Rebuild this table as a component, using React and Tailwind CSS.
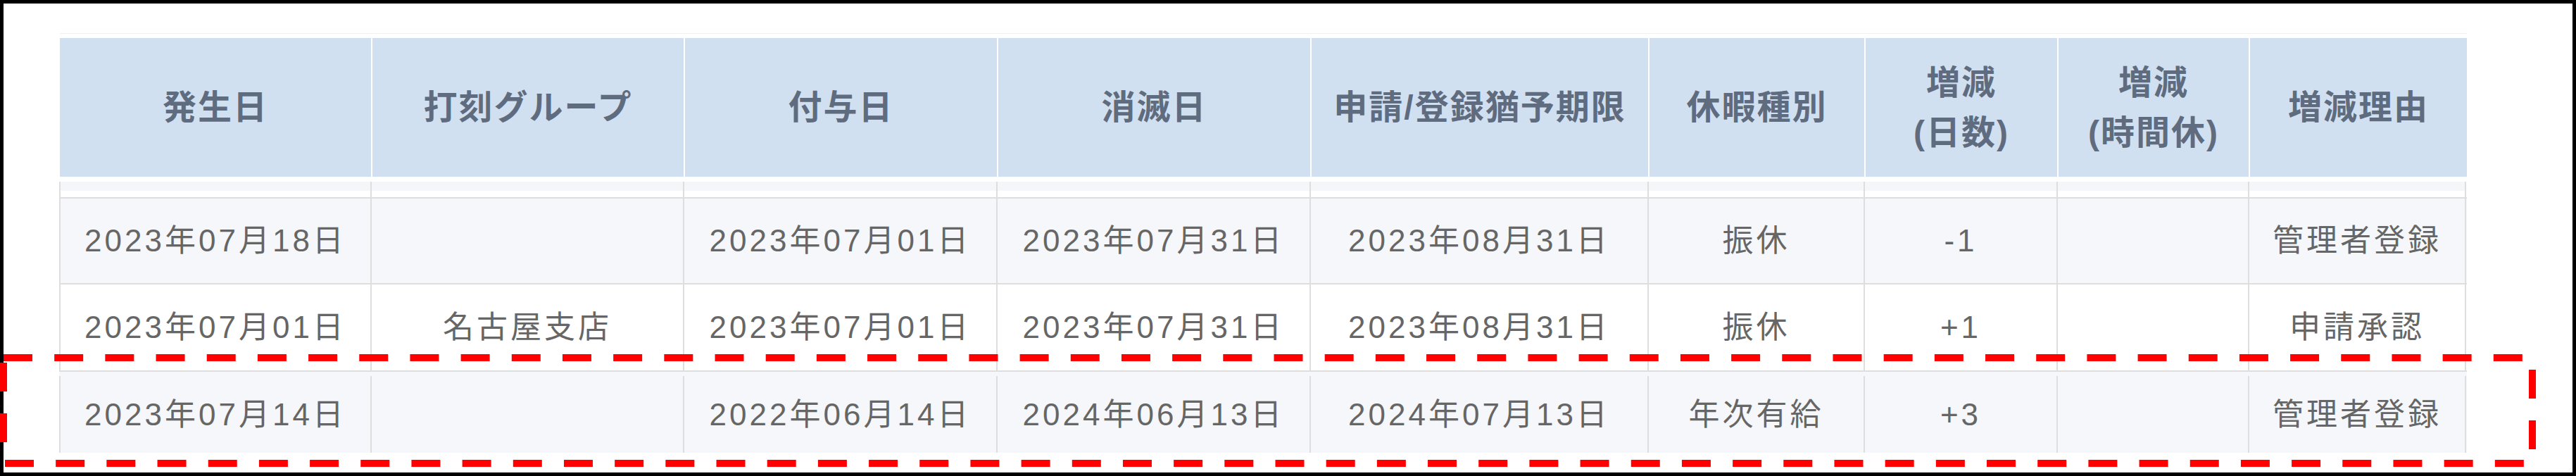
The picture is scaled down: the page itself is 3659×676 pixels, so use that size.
import React from 'react';

// Leave history table (休暇の増減履歴) with a red dashed annotation box
// drawn over the last row, as in the captured screenshot.

const COLS = 'grid-cols-[442px_444px_445px_445px_480px_307px_274px_272px_310px]';

const HEADERS = [
  ['発生日'],
  ['打刻グループ'],
  ['付与日'],
  ['消滅日'],
  ['申請/登録猶予期限'],
  ['休暇種別'],
  ['増減', '(日数)'],
  ['増減', '(時間休)'],
  ['増減理由'],
];

const ROWS = [
  {
    bg: 'bg-[#f5f7fa]',
    h: 'h-[122px]',
    cells: ['2023年07月18日', '', '2023年07月01日', '2023年07月31日', '2023年08月31日', '振休', '-1', '', '管理者登録'],
  },
  {
    bg: 'bg-white',
    h: 'h-[124px]',
    cells: ['2023年07月01日', '名古屋支店', '2023年07月01日', '2023年07月31日', '2023年08月31日', '振休', '+1', '', '申請承認'],
  },
  {
    bg: 'bg-[#f5f7fa]',
    h: 'h-[117px] pt-[6px]',
    cells: ['2023年07月14日', '', '2022年06月14日', '2024年06月13日', '2024年07月13日', '年次有給', '+3', '', '管理者登録'],
  },
];

function HeaderRow() {
  return (
    <div className={`grid ${COLS} h-[197px]`}>
      {HEADERS.map((lines, i) => (
        <div
          key={i}
          className={`flex flex-col items-center justify-center bg-[#d1e0f0] text-[48px] leading-[71px] font-bold tracking-[2px] text-[#5f6c7f] ${
            i > 0 ? 'border-l-2 border-white' : ''
          }`}
        >
          {lines.map((l) => (
            <span key={l}>{l}</span>
          ))}
        </div>
      ))}
    </div>
  );
}

function SpacerRow() {
  return (
    <div className={`grid ${COLS} h-[22px]`}>
      {HEADERS.map((_, i) => (
        <div
          key={i}
          className={`border-l-2 border-[#dedede] ${i === HEADERS.length - 1 ? 'border-r-2' : ''}`}
        >
          <div className="h-[13px] bg-[#f5f6f9]" />
        </div>
      ))}
    </div>
  );
}

function BodyRow({ row }) {
  return (
    <div className={`grid ${COLS} ${row.bg} border-t-2 border-[#dedede] box-border ${row.h}`}>
      {row.cells.map((c, i) => (
        <div
          key={i}
          className={`flex items-center justify-center border-l-2 border-[#dedede] text-[44px] tracking-[4px] text-[#666666] ${
            i === row.cells.length - 1 ? 'border-r-2' : ''
          }`}
        >
          {c}
        </div>
      ))}
    </div>
  );
}

function Annotation() {
  return (
    <svg className="absolute top-0 left-0 pointer-events-none" width="3659" height="676">
      <g stroke="#ff0000" strokeWidth="10" fill="none">
        <line x1="5" y1="508" x2="3583" y2="508" strokeDasharray="41 31.18" />
        <line x1="7" y1="658" x2="3585" y2="658" strokeDasharray="41 31.18" />
        <line x1="5" y1="515" x2="5" y2="650" strokeDasharray="41 31" />
        <line x1="3597" y1="525" x2="3597" y2="650" strokeDasharray="41 31" />
      </g>
    </svg>
  );
}

export default function App() {
  return (
    <div
      className="relative w-[3659px] h-[676px] bg-white"
      style={{ fontFamily: '"Liberation Sans", "Noto Sans CJK JP", sans-serif' }}
    >
      <div className="w-full h-full box-border border-[5px] border-black pl-[80px] pt-[42px]">
        <div className="w-[3419px]">
          <div className="h-px bg-[#eef0f3]" />
          <div className="mt-[6px]">
            <HeaderRow />
          </div>
          <div className="h-[7px]" />
          <div className="-ml-px">
            <SpacerRow />
            {ROWS.map((r, i) => (
              <BodyRow key={i} row={r} />
            ))}
          </div>
        </div>
      </div>
      <Annotation />
    </div>
  );
}
